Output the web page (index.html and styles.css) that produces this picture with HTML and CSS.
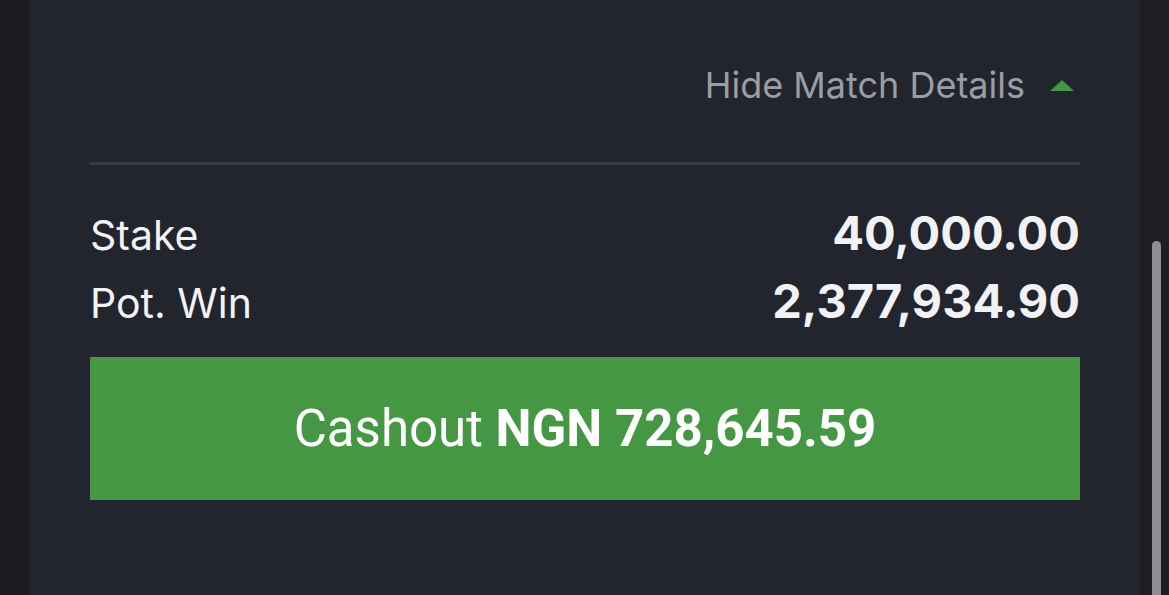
FILE: index.html
```html
<!DOCTYPE html>
<html lang="en">
<head>
<meta charset="utf-8">
<title>Bet Slip</title>
<link rel="stylesheet" href="styles.css">
</head>
<body>
<div class="page">
  <main class="panel">
    <div class="toggle-row">
      <span class="toggle-text">Hide Match Details</span>
      <svg class="caret" width="24" height="11" viewBox="0 0 24 11"><path d="M12 0 L24 11 L0 11 Z" fill="#3f9a42"/></svg>
    </div>
    <div class="divider"></div>
    <div class="summary">
      <div class="row"><span class="label">Stake</span><span class="value">40,000.00</span></div>
      <div class="row"><span class="label">Pot. Win</span><span class="value">2,377,934.90</span></div>
    </div>
    <button class="cashout">Cashout <strong>NGN 728,645.59</strong></button>
  </main>
  <aside class="rail">
    <div class="thumb"></div>
  </aside>
</div>
</body>
</html>
```
FILE: styles.css
```css
html, body {
  margin: 0;
  height: 100%;
  background: #1b1c20;
  overflow: hidden;
}
.page {
  display: flex;
  height: 595px;
  padding-left: 30px;
  box-sizing: border-box;
}
.panel {
  width: 1110px;
  background: #22252d;
  padding: 60px 60px 0;
  box-sizing: border-box;
  display: flex;
  flex-direction: column;
  font-family: Inter, "Noto Sans", sans-serif;
}
.toggle-row {
  display: flex;
  justify-content: flex-end;
  align-items: center;
  height: 50px;
  margin-bottom: 52px;
}
.toggle-text {
  color: #9b9da4;
  font-size: 36px;
  line-height: 50px;
  margin-right: 25px;
}
.caret {
  margin-right: 6px;
}
.divider {
  height: 3px;
  background: #383b43;
}
.summary {
  padding-top: 34px;
}
.row {
  display: flex;
  justify-content: space-between;
  align-items: baseline;
  height: 68px;
  color: #f2f2f4;
}
.label {
  font-size: 41px;
  line-height: 68px;
}
.value {
  font-size: 47px;
  font-weight: 700;
  line-height: 68px;
}
.cashout {
  margin-top: 22px;
  height: 143px;
  border: 0;
  background: #459743;
  color: #ffffff;
  font-family: Roboto, "Liberation Sans", sans-serif;
  font-size: 51px;
  padding: 0;
}
.cashout strong {
  font-weight: 700;
}
.rail {
  width: 29px;
  background: #1d1e22;
  display: flex;
  flex-direction: column;
  padding-top: 241px;
  padding-left: 12px;
  box-sizing: border-box;
}
.thumb {
  width: 9px;
  flex: 1;
  background: #8f9095;
  border-radius: 5px 5px 0 0;
}
```
